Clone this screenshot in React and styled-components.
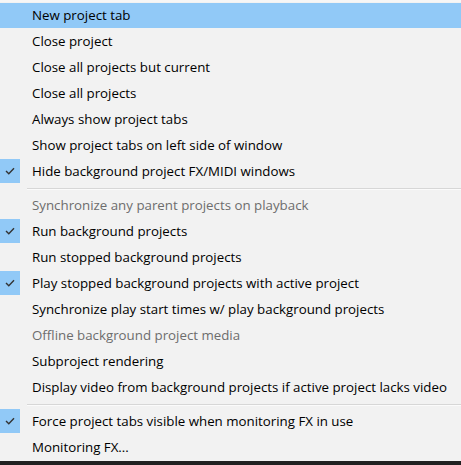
import React from "react";
import styled, { createGlobalStyle } from "styled-components";

const Global = createGlobalStyle`
  html, body { margin: 0; padding: 0; background: #f2f2f2; }
  body { font-family: "Open Sans", "Noto Sans", sans-serif; }
`;

const Menu = styled.div`
  width: 461px;
  height: 465px;
  background: #f2f2f2;
  border-top: 2px solid #f6f6f6;
  box-sizing: border-box;
  display: flex;
  flex-direction: column;
`;

const Item = styled.div`
  position: relative;
  height: 26px;
  flex: 0 0 26px;
  display: flex;
  align-items: center;
  padding-left: 32px;
  font-size: 13.3px;
  color: ${(p) => (p.$disabled ? "#6d6d6d" : "#000")};
  box-sizing: border-box;
  white-space: nowrap;
  background: ${(p) =>
    p.$hot ? "linear-gradient(#91c9f7, #91c9f7) 0 1px / 100% 25px no-repeat" : "transparent"};
`;

const CheckBox = styled.span`
  position: absolute;
  left: 0;
  top: 1px;
  width: 20px;
  height: 24px;
  background: #91c9f7;
  display: flex;
  align-items: center;
  justify-content: center;
`;

const Separator = styled.div`
  flex: 0 0 8px;
  height: 8px;
  display: flex;
  align-items: center;
  padding-left: 27px;
  &::after {
    content: "";
    flex: 1;
    height: 1px;
    background: #d7d7d7;
    box-shadow: 0 1px 0 #fbfbfb;
  }
`;

const Taskbar = styled.div`
  flex: 1;
  background: #202020;
  margin-top: 1px;
`;

const Check = () => (
  <svg width="10" height="8" viewBox="0 0 10 8">
    <polyline points="1,4 3.8,6.8 9,1.2" fill="none" stroke="#333" strokeWidth="1.4" />
  </svg>
);

const items = [
  { t: "New project tab", hot: true },
  { t: "Close project" },
  { t: "Close all projects but current" },
  { t: "Close all projects" },
  { t: "Always show project tabs" },
  { t: "Show project tabs on left side of window" },
  { t: "Hide background project FX/MIDI windows", c: true },
  "sep",
  { t: "Synchronize any parent projects on playback", d: true },
  { t: "Run background projects", c: true },
  { t: "Run stopped background projects" },
  { t: "Play stopped background projects with active project", c: true },
  { t: "Synchronize play start times w/ play background projects" },
  { t: "Offline background project media", d: true },
  { t: "Subproject rendering" },
  { t: "Display video from background projects if active project lacks video" },
  "sep",
  { t: "Force project tabs visible when monitoring FX in use", c: true },
  { t: "Monitoring FX..." },
];

export default function App() {
  return (
    <>
      <Global />
      <Menu>
        {items.map((it, i) =>
          it === "sep" ? (
            <Separator key={i} />
          ) : (
            <Item key={i} $hot={it.hot} $disabled={it.d}>
              {it.c && (
                <CheckBox>
                  <Check />
                </CheckBox>
              )}
              {it.t}
            </Item>
          )
        )}
        <Taskbar />
      </Menu>
    </>
  );
}
